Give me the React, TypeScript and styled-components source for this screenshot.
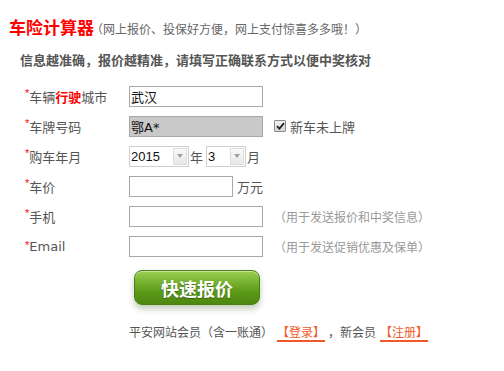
import React from "react";
import styled, { createGlobalStyle } from "styled-components";

const Global = createGlobalStyle`
  html, body { margin: 0; padding: 0; background: #fff; }
  body {
    font-family: "Noto Sans CJK SC", "Microsoft YaHei", sans-serif;
    color: #555;
    text-spacing-trim: space-all;
  }
  * { box-sizing: border-box; }
`;

const Page = styled.div`
  width: 504px;
  height: 371px;
  padding: 15px 0 0 9px;
  overflow: hidden;
`;

const TitleBar = styled.div`
  display: flex;
  align-items: baseline;
  line-height: 24px;
  height: 24px;
`;

const Title = styled.h1`
  margin: 0;
  font-size: 17px;
  font-weight: bold;
  color: #f00;
`;

const TitleNote = styled.span`
  font-size: 12px;
  color: #666;
  margin-left: -3px;
`;

const Notice = styled.p`
  margin: 11px 0 0 11px;
  font-size: 13px;
  font-weight: bold;
  color: #555;
  line-height: 20px;
`;

const Form = styled.div`
  margin: 11px 0 0 16px;
  display: grid;
  grid-template-columns: 104px 1fr;
  grid-auto-rows: 30px;
  align-items: center;
`;

const Label = styled.label`
  font-size: 13px;
  color: #555;
  display: flex;
  align-items: center;
  white-space: nowrap;
`;

const Star = styled.span`
  color: #f00;
  font-family: "Liberation Sans", sans-serif;
  font-size: 11px;
  align-self: flex-start;
  line-height: 10px;
  margin-top: 1px;
`;

const Strong = styled.b`
  color: #f00;
`;

const Field = styled.div`
  display: flex;
  align-items: center;
  font-size: 13px;
  color: #555;
`;

const TextBox = styled.div<{ $w?: number; $gray?: boolean }>`
  width: ${(p) => p.$w ?? 134}px;
  height: 21px;
  border: 1px solid #a8a8a8;
  background: ${(p) => (p.$gray ? "#c9c9c9" : "#fff")};
  font-size: 13px;
  color: #111;
  line-height: 19px;
  padding-left: 1px;
`;

const Hint = styled.span`
  font-size: 12px;
  color: #999;
  margin-left: 11px;
`;

const Unit = styled.span`
  font-size: 13px;
  color: #555;
  margin-left: 4px;
`;

const Check = styled.span`
  margin-left: 11px;
  display: inline-flex;
  align-items: center;
  font-size: 13px;
  color: #555;
`;

const CheckBox = styled.span`
  width: 12px;
  height: 12px;
  border: 1px solid #8a8a8a;
  border-radius: 1px;
  background: linear-gradient(#f2f2f2, #d6d6d6);
  display: inline-flex;
  align-items: center;
  justify-content: center;
  margin-right: 4px;
`;

const Select = styled.div<{ $w: number }>`
  width: ${(p) => p.$w}px;
  height: 21px;
  border: 1px solid #cfcfcf;
  display: flex;
  align-items: center;
  justify-content: space-between;
  padding: 1px;
  font-size: 13px;
  color: #111;
  font-family: "Liberation Sans", sans-serif;
`;

const Arrow = styled.span`
  width: 14px;
  height: 17px;
  border: 1px solid #dcdcdc;
  background: linear-gradient(#fafafa, #e8e8e8);
  display: flex;
  align-items: center;
  justify-content: center;
  &::after {
    content: "";
    border-left: 3px solid transparent;
    border-right: 3px solid transparent;
    border-top: 4px solid #a0a0a0;
  }
`;

const Sep = styled.span`
  margin: 0 3px 0 1px;
  font-size: 13px;
  color: #555;
`;

const Latin = styled.span`
  font-family: "DejaVu Sans", sans-serif;
  font-size: 13px;
`;

const Actions = styled.div`
  margin: 9px 0 0 125px;
`;

const QuoteButton = styled.button`
  width: 126px;
  height: 35px;
  border: 1px solid #4a7f14;
  border-radius: 8px;
  background: linear-gradient(#9ccf52 0%, #76b12f 35%, #5a9818 65%, #4d880f 100%);
  box-shadow: inset 0 1px 0 rgba(255, 255, 255, 0.45), 0 4px 6px rgba(60, 90, 30, 0.3);
  color: #fff;
  font-family: "Noto Sans CJK SC", sans-serif;
  font-size: 18px;
  font-weight: bold;
  text-shadow: 0 1px 1px rgba(0, 0, 0, 0.35);
  padding: 0;
  cursor: pointer;
`;

const Member = styled.div`
  margin: 17px 0 0 120px;
  font-size: 12px;
  color: #555;
  line-height: 20px;
  white-space: nowrap;
`;

const Link = styled.a`
  color: #f05a28;
  text-decoration: underline;
  text-decoration-thickness: 2px;
  text-underline-offset: 3px;
  margin: 0 3px 0 4px;
`;

export default function App() {
  return (
    <>
      <Global />
      <Page>
        <TitleBar>
          <Title>车险计算器</Title>
          <TitleNote>（网上报价、投保好方便，网上支付惊喜多多哦！）</TitleNote>
        </TitleBar>
        <Notice>信息越准确，报价越精准，请填写正确联系方式以便中奖核对</Notice>
        <Form>
          <Label>
            <Star>*</Star>车辆<Strong>行驶</Strong>城市
          </Label>
          <Field>
            <TextBox>武汉</TextBox>
          </Field>

          <Label>
            <Star>*</Star>车牌号码
          </Label>
          <Field>
            <TextBox $gray>
              鄂<Latin>A*</Latin>
            </TextBox>
            <Check>
              <CheckBox>
                <svg width="9" height="8" viewBox="0 0 9 8">
                  <path d="M1 4.2 L3.4 6.6 L8 1.2" fill="none" stroke="#222" strokeWidth="1.8" />
                </svg>
              </CheckBox>
              新车未上牌
            </Check>
          </Field>

          <Label>
            <Star>*</Star>购车年月
          </Label>
          <Field>
            <Select $w={60}>
              <span>2015</span>
              <Arrow />
            </Select>
            <Sep>年</Sep>
            <Select $w={40}>
              <span>3</span>
              <Arrow />
            </Select>
            <Sep>月</Sep>
          </Field>

          <Label>
            <Star>*</Star>车价
          </Label>
          <Field>
            <TextBox $w={104} />
            <Unit>万元</Unit>
          </Field>

          <Label>
            <Star>*</Star>手机
          </Label>
          <Field>
            <TextBox />
            <Hint>（用于发送报价和中奖信息）</Hint>
          </Field>

          <Label>
            <Star>*</Star>
            <Latin>Email</Latin>
          </Label>
          <Field>
            <TextBox />
            <Hint>（用于发送促销优惠及保单）</Hint>
          </Field>
        </Form>
        <Actions>
          <QuoteButton>快速报价</QuoteButton>
        </Actions>
        <Member>
          平安网站会员（含一账通）<Link>【登录】</Link>，新会员<Link>【注册】</Link>
        </Member>
      </Page>
    </>
  );
}
